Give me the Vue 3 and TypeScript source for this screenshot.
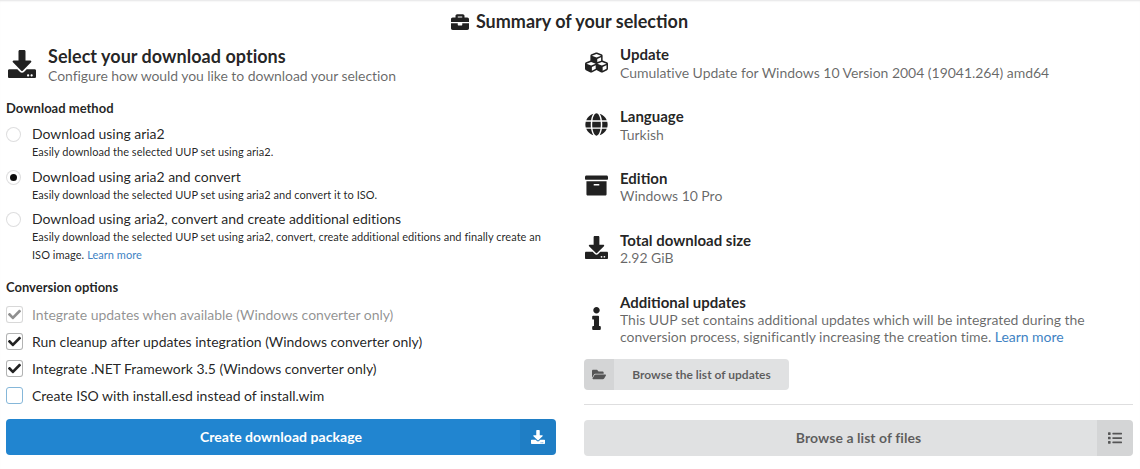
<script setup lang="ts">
const icons = {
  download: { box: '0 0 512 512', d: 'M216 0h80c13.3 0 24 10.7 24 24v168h87.7c17.8 0 26.7 21.5 14.1 34.1L269.7 378.3c-7.5 7.5-19.8 7.5-27.3 0L90.1 226.1c-12.6-12.6-3.7-34.1 14.1-34.1H192V24c0-13.3 10.7-24 24-24zm296 376v112c0 13.3-10.7 24-24 24H24c-13.3 0-24-10.7-24-24V376c0-13.3 10.7-24 24-24h146.7l49 49c20.1 20.1 52.5 20.1 72.6 0l49-49H488c13.3 0 24 10.7 24 24zm-124 88c0-11-9-20-20-20s-20 9-20 20 9 20 20 20 20-9 20-20zm64 0c0-11-9-20-20-20s-20 9-20 20 9 20 20 20 20-9 20-20z' },
  briefcase: { box: '0 0 512 512', d: 'M320 336c0 8.84-7.16 16-16 16h-96c-8.84 0-16-7.16-16-16v-48H0v144c0 25.6 22.4 48 48 48h416c25.6 0 48-22.4 48-48V288H320v48zm144-208h-80V80c0-25.6-22.4-48-48-48H176c-25.6 0-48 22.4-48 48v48H48c-25.6 0-48 22.4-48 48v80h512v-80c0-25.6-22.4-48-48-48zm-144 0H192V96h128v32z' },
  globe: { box: '0 0 496 512', d: 'M336.5 160C322 70.7 287.8 8 248 8s-74 62.7-88.5 152h177zM152 256c0 22.2 1.2 43.5 3.3 64h185.3c2.1-20.5 3.3-41.8 3.3-64s-1.2-43.5-3.3-64H155.3c-2.1 20.5-3.3 41.8-3.3 64zm324.7-96c-28.6-67.9-86.5-120.4-158-141.6 24.4 33.8 41.2 84.7 50 141.6h108zM177.2 18.4C105.8 39.6 47.8 92.1 19.3 160h108c8.7-56.9 25.5-107.8 49.9-141.6zM487.4 192H372.7c2.1 21 3.3 42.5 3.3 64s-1.2 43-3.3 64h114.6c5.5-20.5 8.6-41.8 8.6-64s-3.1-43.5-8.5-64zM120 256c0-21.5 1.2-43 3.3-64H8.6C3.2 212.5 0 233.8 0 256s3.2 43.5 8.6 64h114.6c-2-21-3.2-42.5-3.2-64zm39.5 96c14.5 89.3 48.7 152 88.5 152s74-62.7 88.5-152h-177zm159.3 141.6c71.4-21.2 129.4-73.7 158-141.6h-108c-8.8 56.9-25.6 107.8-50 141.6zM19.3 352c28.6 67.9 86.5 120.4 158 141.6-24.4-33.8-41.2-84.7-50-141.6h-108z' },
  archive: { box: '0 0 512 512', d: 'M32 448c0 17.7 14.3 32 32 32h384c17.7 0 32-14.3 32-32V160H32v288zm160-212c0-6.6 5.4-12 12-12h104c6.6 0 12 5.4 12 12v8c0 6.6-5.4 12-12 12H204c-6.6 0-12-5.4-12-12v-8zM480 32H32C14.3 32 0 46.3 0 64v48c0 8.8 7.2 16 16 16h480c8.8 0 16-7.2 16-16V64c0-17.7-14.3-32-32-32z' },
  cubes: { box: '0 0 512 512', d: 'M488.6 250.2L392 214V105.5c0-15-9.3-28.4-23.4-33.7l-100-37.5c-8.1-3.1-17.1-3.1-25.3 0l-100 37.5c-14.1 5.3-23.4 18.7-23.4 33.7V214l-96.6 36.2C9.3 255.5 0 268.9 0 283.9V394c0 13.6 7.7 26.1 19.9 32.2l100 50c10.1 5.1 22.1 5.1 32.2 0l103.9-52 103.9 52c10.1 5.1 22.1 5.1 32.2 0l100-50c12.2-6.1 19.9-18.6 19.9-32.2V283.9c0-15-9.3-28.4-23.4-33.7zM358 214.8l-85 31.9v-68.2l85-37v73.3zM154 104.1l102-38.2 102 38.2v.6l-102 41.4-102-41.4v-.6zm84 291.1l-85 42.5v-79.1l85-38.8v75.4zm0-112l-102 41.4-102-41.4v-.6l102-38.2 102 38.2v.6zm240 112l-85 42.5v-79.1l85-38.8v75.4zm0-112l-102 41.4-102-41.4v-.6l102-38.2 102 38.2v.6z' },
  info: { box: '0 0 192 512', d: 'M20 424.229h20V279.771H20c-11.046 0-20-8.954-20-20V212c0-11.046 8.954-20 20-20h112c11.046 0 20 8.954 20 20v212.229h20c11.046 0 20 8.954 20 20V492c0 11.046-8.954 20-20 20H20c-11.046 0-20-8.954-20-20v-47.771c0-11.046 8.954-20 20-20zM96 0C56.235 0 24 32.235 24 72s32.235 72 72 72 72-32.235 72-72S135.764 0 96 0z' },
  folder: { box: '0 0 576 512', d: 'M572.694 292.093L500.27 416.248A63.997 63.997 0 0 1 444.989 448H45.025c-18.523 0-30.064-20.093-20.731-36.093l72.424-124.155A64 64 0 0 1 152 256h399.964c18.523 0 30.064 20.093 20.73 36.093zM152 224h328v-48c0-26.51-21.49-48-48-48H272l-64-64H48C21.49 64 0 85.49 0 112v278.046l69.077-118.418C86.214 242.25 117.989 224 152 224z' },
  list: { box: '0 0 512 512', d: 'M80 368H16a16 16 0 0 0-16 16v64a16 16 0 0 0 16 16h64a16 16 0 0 0 16-16v-64a16 16 0 0 0-16-16zm0-320H16A16 16 0 0 0 0 64v64a16 16 0 0 0 16 16h64a16 16 0 0 0 16-16V64a16 16 0 0 0-16-16zm0 160H16a16 16 0 0 0-16 16v64a16 16 0 0 0 16 16h64a16 16 0 0 0 16-16v-64a16 16 0 0 0-16-16zm416 176H176a16 16 0 0 0-16 16v32a16 16 0 0 0 16 16h320a16 16 0 0 0 16-16v-32a16 16 0 0 0-16-16zm0-320H176a16 16 0 0 0-16 16v32a16 16 0 0 0 16 16h320a16 16 0 0 0 16-16V80a16 16 0 0 0-16-16zm0 160H176a16 16 0 0 0-16 16v32a16 16 0 0 0 16 16h320a16 16 0 0 0 16-16v-32a16 16 0 0 0-16-16z' },
  check: { box: '0 0 512 512', d: 'M173.898 439.404l-166.4-166.4c-9.997-9.997-9.997-26.206 0-36.204l36.203-36.204c9.997-9.998 26.207-9.998 36.204 0L192 312.69 432.095 72.596c9.997-9.997 26.207-9.997 36.204 0l36.203 36.204c9.997 9.997 9.997 26.206 0 36.204l-294.4 294.401c-9.998 9.997-26.207 9.997-36.204-.001z' },
}

const methods = [
  { label: 'Download using aria2', desc: 'Easily download the selected UUP set using aria2.', on: false, more: false },
  { label: 'Download using aria2 and convert', desc: 'Easily download the selected UUP set using aria2 and convert it to ISO.', on: true, more: false },
  { label: 'Download using aria2, convert and create additional editions', desc: 'Easily download the selected UUP set using aria2, convert, create additional editions and finally create an ISO image. ', on: false, more: true },
]

const options = [
  { label: 'Integrate updates when available (Windows converter only)', on: true, disabled: true, focus: false },
  { label: 'Run cleanup after updates integration (Windows converter only)', on: true, disabled: false, focus: false },
  { label: 'Integrate .NET Framework 3.5 (Windows converter only)', on: true, disabled: false, focus: false },
  { label: 'Create ISO with install.esd instead of install.wim', on: false, disabled: false, focus: true },
]

const summary = [
  { icon: icons.cubes, title: 'Update', text: 'Cumulative Update for Windows 10 Version 2004 (19041.264) amd64' },
  { icon: icons.globe, title: 'Language', text: 'Turkish' },
  { icon: icons.archive, title: 'Edition', text: 'Windows 10 Pro' },
  { icon: icons.download, title: 'Total download size', text: '2.92 GiB' },
]
</script>

<template>
  <div class="page">
    <h3 class="main-title">
      <svg class="title-icon" :viewBox="icons.briefcase.box"><path :d="icons.briefcase.d" /></svg>
      Summary of your selection
    </h3>
    <div class="columns">
      <section class="col">
        <div class="head">
          <svg class="head-icon" :viewBox="icons.download.box"><path :d="icons.download.d" /></svg>
          <div>
            <div class="head-title">Select your download options</div>
            <div class="head-sub">Configure how would you like to download your selection</div>
          </div>
        </div>

        <div class="group-label first">Download method</div>
        <div class="radios">
          <div v-for="m in methods" :key="m.label" class="radio-row">
            <span class="radio" :class="{ on: m.on }"></span>
            <div>
              <div class="opt-label">{{ m.label }}</div>
              <div class="opt-desc">{{ m.desc }}<a v-if="m.more" class="link">Learn more</a></div>
            </div>
          </div>
        </div>

        <div class="group-label second">Conversion options</div>
        <div class="checks">
          <div v-for="o in options" :key="o.label" class="check-row" :class="{ disabled: o.disabled }">
            <span class="box" :class="{ checked: o.on, focus: o.focus }">
              <svg v-if="o.on" class="tick" :viewBox="icons.check.box"><path :d="icons.check.d" /></svg>
            </span>
            <span class="opt-label">{{ o.label }}</span>
          </div>
        </div>

        <div class="btn primary">
          <span class="btn-text">Create download package</span>
          <span class="btn-icon">
            <svg :viewBox="icons.download.box"><path :d="icons.download.d" /></svg>
          </span>
        </div>
      </section>

      <section class="col">
        <div class="summary">
          <div v-for="s in summary" :key="s.title" class="item">
            <svg class="item-icon" :viewBox="s.icon.box"><path :d="s.icon.d" /></svg>
            <div>
              <div class="item-title">{{ s.title }}</div>
              <div class="item-text">{{ s.text }}</div>
            </div>
          </div>
          <div class="item">
            <svg class="item-icon" :viewBox="icons.info.box"><path :d="icons.info.d" /></svg>
            <div>
              <div class="item-title">Additional updates</div>
              <div class="item-text">This UUP set contains additional updates which will be integrated during the conversion process, significantly increasing the creation time. <a class="link">Learn more</a></div>
            </div>
          </div>
        </div>

        <div class="btn small">
          <span class="small-icon">
            <svg :viewBox="icons.folder.box"><path :d="icons.folder.d" /></svg>
          </span>
          <span class="small-text">Browse the list of updates</span>
        </div>

        <div class="divider"></div>

        <div class="btn grey">
          <span class="btn-text">Browse a list of files</span>
          <span class="btn-icon">
            <svg :viewBox="icons.list.box"><path :d="icons.list.d" /></svg>
          </span>
        </div>
      </section>
    </div>
  </div>
</template>

<style>
html, body { margin: 0; background: #fff; }
</style>

<style scoped>
.page {
  height: 469px;
  box-sizing: border-box;
  overflow: hidden;
  font-family: Lato, "Helvetica Neue", Arial, sans-serif;
  font-size: 14px;
  line-height: 20px;
  color: rgba(0, 0, 0, 0.87);
  box-shadow: inset 0 2px 2px -1px rgba(34, 36, 38, 0.12);
  padding: 10px 7px 0 6px;
}
svg { display: block; fill: currentColor; }
.main-title {
  margin: 0;
  height: 23px;
  display: flex;
  justify-content: center;
  align-items: center;
  gap: 7px;
  font-size: 18px;
  line-height: 23px;
  font-weight: 700;
}
.title-icon { width: 18px; height: 18px; }
.columns {
  display: grid;
  grid-template-columns: 550px 549px;
  column-gap: 28px;
  margin-top: 10px;
}
.col { min-width: 0; }
.head {
  display: flex;
  align-items: flex-start;
  height: 40px;
}
.head-icon { width: 28px; height: 28px; margin: 7px 12px 0 2px; flex: none; }
.head-title { font-size: 18px; line-height: 23px; font-weight: 700; margin-top: 2px; letter-spacing: 0.03px; }
.head-sub { font-size: 14px; line-height: 18px; letter-spacing: -0.07px; margin-top: -1px; color: rgba(0, 0, 0, 0.6); }
.group-label { font-size: 13px; line-height: 16px; font-weight: 700; }
.group-label.first { margin-top: 17px; }
.group-label.second { margin-top: 15px; }
.radios { margin-top: 9px; }
.radio-row { display: flex; align-items: flex-start; margin-bottom: 6.5px; }
.radio-row:last-child { margin-bottom: 0; }
.radio {
  flex: none;
  box-sizing: border-box;
  width: 15px;
  height: 15px;
  margin: 2px 11px 0 0;
  border: 1px solid rgba(34, 36, 38, 0.15);
  border-radius: 50%;
  background: #fff;
  display: flex;
  align-items: center;
  justify-content: center;
}
.radio.on::after {
  content: "";
  width: 7px;
  height: 7px;
  border-radius: 50%;
  background: rgba(0, 0, 0, 0.95);
}
.opt-label { font-size: 14px; line-height: 18px; letter-spacing: -0.03px; }
.opt-desc { font-size: 11px; line-height: 18px; letter-spacing: 0.04px; }
.link { color: #4183c4; }
.checks { margin-top: 6px; }
.check-row { display: flex; align-items: center; height: 27px; }
.check-row.disabled { opacity: 0.5; }
.box {
  flex: none;
  box-sizing: border-box;
  width: 17px;
  height: 17px;
  margin-right: 9px;
  border: 1px solid rgba(34, 36, 38, 0.25);
  border-radius: 3px;
  background: #fff;
  display: flex;
  align-items: center;
  justify-content: center;
}
.box.checked { border-color: rgba(34, 36, 38, 0.35); }
.box.focus { border-color: #85b7d9; }
.tick { width: 13px; height: 13px; }
.btn {
  display: flex;
  border-radius: 4px;
  font-weight: 700;
  overflow: hidden;
}
.primary, .grey { height: 36px; align-items: stretch; }
.primary { background: #2185d0; color: #fff; margin-top: 10px; }
.grey { background: #e0e1e2; color: rgba(0, 0, 0, 0.6); }
.btn-text {
  flex: 1;
  display: flex;
  align-items: center;
  justify-content: center;
  padding-left: 36px;
  font-size: 14px;
  letter-spacing: 0.05px;
}
.btn-icon {
  flex: none;
  width: 36px;
  display: flex;
  align-items: center;
  justify-content: center;
  background: rgba(0, 0, 0, 0.05);
}
.btn-icon svg { width: 14px; height: 14px; }
.summary { margin-top: 2px; }
.item { display: flex; align-items: center; margin-bottom: 26px; }
.item:nth-child(n+3) { margin-bottom: 27px; }
.item:nth-child(n+3) .item-text { margin-top: 0; }
.item:last-child { margin-bottom: 14px; }
.item-icon { flex: none; width: 23px; height: 23px; margin: -2px 12px 0 1px; }
.item-title { font-size: 15px; line-height: 18px; font-weight: 700; }
.item-text { font-size: 14px; line-height: 17px; letter-spacing: -0.03px; color: rgba(0, 0, 0, 0.6); margin-top: 1px; }
.small {
  width: 205px;
  height: 31px;
  background: #e0e1e2;
  color: rgba(0, 0, 0, 0.6);
  font-size: 12px;
}
.small-icon {
  flex: none;
  width: 30px;
  display: flex;
  align-items: center;
  justify-content: center;
  background: rgba(0, 0, 0, 0.05);
}
.small-icon svg { width: 14px; height: 13px; }
.small-text { flex: 1; display: flex; align-items: center; justify-content: center; }
.divider { height: 1px; background: rgba(34, 36, 38, 0.15); margin: 14px 0 15px; }
</style>
